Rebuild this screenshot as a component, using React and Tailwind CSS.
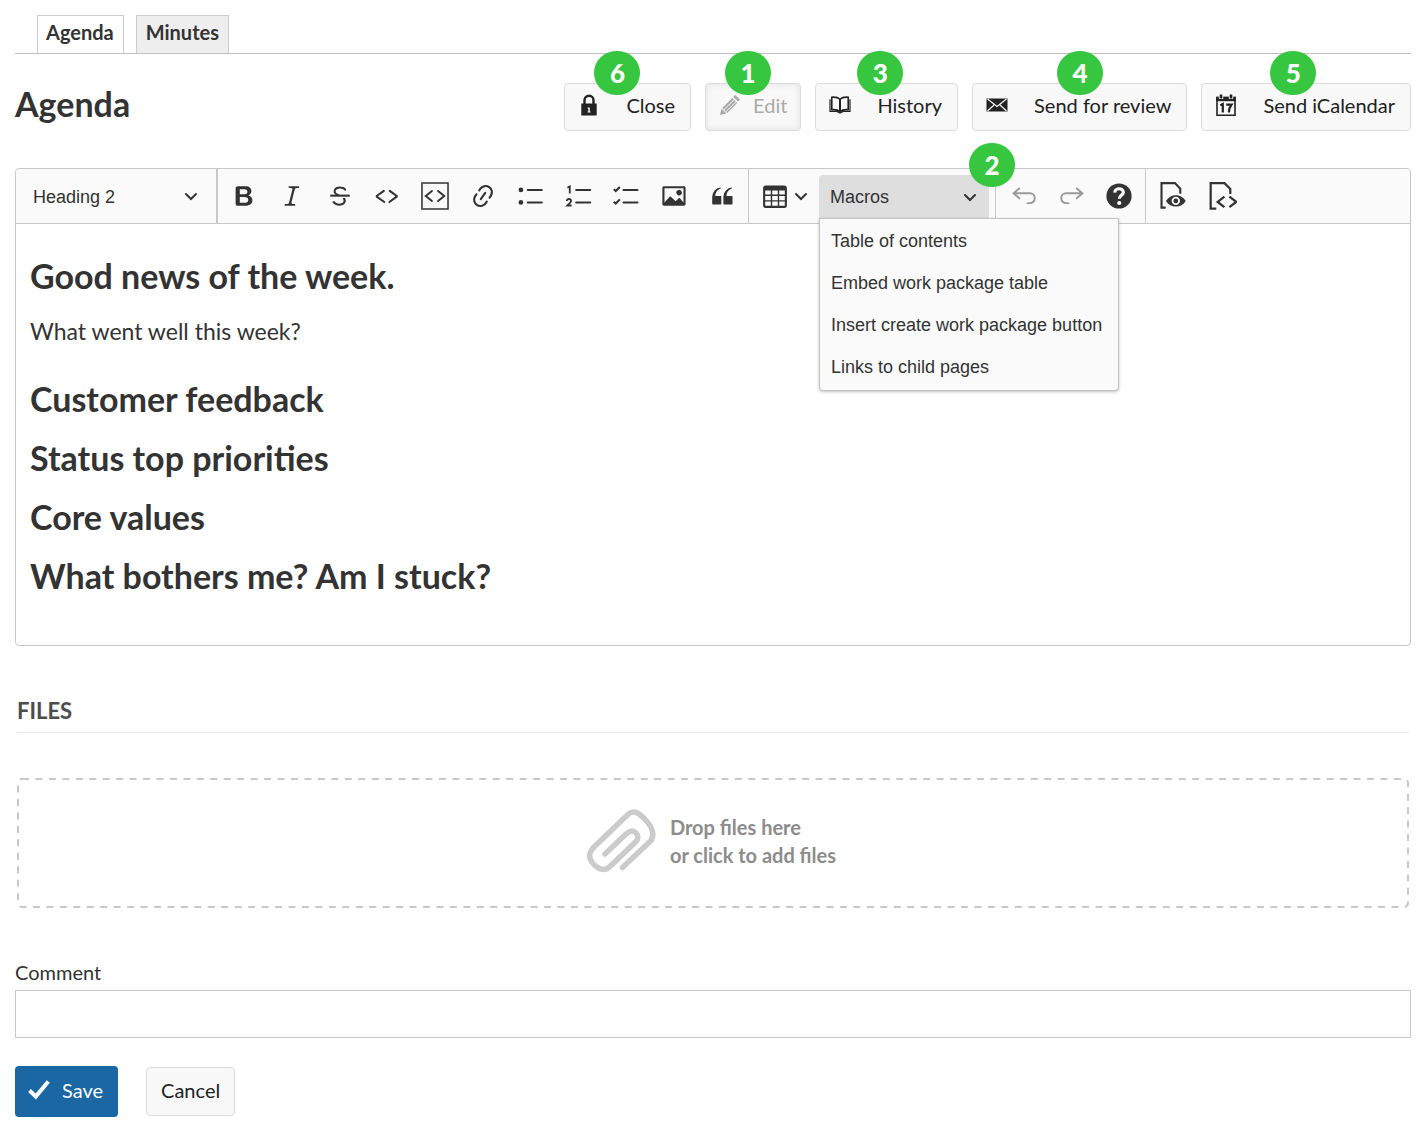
import React from "react";

function Icon({ children, className = "size-7" }) {
  return (
    <svg viewBox="0 0 20 20" fill="currentColor" aria-hidden="true" className={className}>
      {children}
    </svg>
  );
}

const icons = {
  bold: (
    <path d="M10.187 17H5.773c-.637 0-1.092-.138-1.364-.415-.273-.277-.409-.718-.409-1.323V4.738c0-.617.14-1.062.419-1.332.279-.27.73-.406 1.354-.406h4.68c.69 0 1.288.041 1.793.124.506.083.96.242 1.36.478.341.197.644.447.906.75a3.262 3.262 0 0 1 .808 2.162c0 1.401-.722 2.426-2.167 3.075C15.05 10.175 16 11.315 16 13.01a3.756 3.756 0 0 1-2.296 3.504 6.1 6.1 0 0 1-1.517.377c-.571.073-1.238.11-2 .11zm-.217-6.217H7v4.087h3.069c1.977 0 2.965-.69 2.965-2.072 0-.707-.256-1.22-.768-1.537-.512-.319-1.277-.478-2.296-.478zM7 5.13v3.619h2.606c.729 0 1.292-.067 1.69-.2a1.6 1.6 0 0 0 .91-.765c.165-.267.247-.566.247-.897 0-.707-.26-1.176-.778-1.409-.519-.232-1.31-.348-2.375-.348H7z" />
  ),
  italic: (
    <path d="m9.586 14.633.021.004c-.036.335.095.655.393.962.082.083.173.15.274.201h1.474a.6.6 0 1 1 0 1.2H5.304a.6.6 0 0 1 0-1.2h1.15c.474-.07.809-.182 1.005-.334.157-.122.291-.32.404-.597l2.416-9.55a1.053 1.053 0 0 0-.281-.823 1.12 1.12 0 0 0-.442-.296H8.15a.6.6 0 0 1 0-1.2h6.443a.6.6 0 1 1 0 1.2h-1.195c-.376.056-.65.155-.823.296-.215.175-.423.439-.623.79l-2.366 9.347z" />
  ),
  strike: (
    <>
      <path d="M7 16.4c-.8-.4-1.5-.9-2.2-1.5a.6.6 0 0 1-.2-.5l.3-.6h1c1 1.2 2.1 1.7 3.7 1.7 1 0 1.8-.3 2.3-.6.6-.4.6-1.2.6-1.3.2-1.2-.9-2.1-.9-2.1h2.1c.3.7.4 1.2.4 1.7v.8l-.6 1.2c-.6.8-1.1 1-1.6 1.2a6 6 0 0 1-2.4.6c-1 0-1.8-.3-2.5-.6zM6.8 9 6 8.3c-.4-.5-.5-.8-.5-1.6 0-.7.1-1.3.5-1.8.4-.6 1-1 1.6-1.3a6.3 6.3 0 0 1 4.7 0 4 4 0 0 1 1.7 1l.3.7c0 .1.2.4-.2.7-.4.2-.9.1-1 0a3 3 0 0 0-1.2-1c-.4-.2-1-.3-2-.4-.7 0-1.4.2-2 .6-.8.6-1 .8-1 1.5 0 .8.5 1 1.2 1.5.6.4 1.1.7 1.9 1H6.8z" />
      <path d="M3 10.5V9h14v1.5z" />
    </>
  ),
  code: (
    <path d="m12.5 5.7 5.2 3.9v1.3l-5.6 4c-.1.2-.3.2-.5.2-.3-.1-.6-.7-.6-1l.3-.4 4.7-3.5L11.5 7l-.2-.2c-.1-.3-.1-.6 0-.8.2-.2.5-.4.8-.4a.8.8 0 0 1 .4.1zm-5.2 0L2 9.6v1.3l5.6 4c.1.2.3.2.5.2.3-.1.7-.7.6-1 0-.1 0-.3-.2-.4l-5-3.5L8.2 7l.2-.2c.1-.3.1-.6 0-.8-.2-.2-.5-.4-.8-.4a.8.8 0 0 0-.3.1z" />
  ),
  codeBlock: (
    <g fill="none" stroke="currentColor">
      <path d="M.7.7h18.6v18.6H.7z" strokeWidth="1.1" />
      <path d="M7.8 6.4 3.4 10l4.4 3.6M12.2 6.4l4.4 3.6-4.4 3.6" strokeWidth="1.4" strokeLinecap="round" />
    </g>
  ),
  link: (
    <path d="m11.077 15 .991-1.416a.75.75 0 1 1 1.229.86l-1.148 1.64a.748.748 0 0 1-.217.206 5.251 5.251 0 0 1-8.503-5.955.741.741 0 0 1 .12-.274l1.147-1.639a.75.75 0 1 1 1.228.86L4.933 10.7l.006.003a3.75 3.75 0 0 0 6.132 4.294l.006.004zm5.494-5.335a.748.748 0 0 1-.12.274l-1.147 1.639a.75.75 0 1 1-1.228-.86l.86-1.23a3.75 3.75 0 0 0-6.144-4.301l-.86 1.229a.75.75 0 0 1-1.229-.86l1.148-1.64a.748.748 0 0 1 .217-.206 5.251 5.251 0 0 1 8.503 5.955zm-4.563-2.532a.75.75 0 0 1 .184 1.045l-3.155 4.505a.75.75 0 1 1-1.229-.86l3.155-4.506a.75.75 0 0 1 1.045-.184z" />
  ),
  bullets: (
    <>
      <circle cx="2.8" cy="5.7" r="1.7" />
      <circle cx="2.8" cy="14.6" r="1.7" />
      <path d="M7.7 5.7h10M7.7 14.6h10" fill="none" stroke="currentColor" strokeWidth="1.5" strokeLinecap="round" />
    </>
  ),
  numbers: (
    <g fill="none" stroke="currentColor" strokeWidth="1.3">
      <path d="M1.7 4.1 3.4 3.2v5" />
      <path d="M1.3 13.6c.1-2 3.2-1.9 3 0-.1 1-1.6 2-2.7 3.2h3.1" />
      <path d="M8 5.7h10M8 14.6h10" strokeWidth="1.5" strokeLinecap="round" />
    </g>
  ),
  todo: (
    <g fill="none" stroke="currentColor" strokeWidth="1.5">
      <path d="M1.3 5.2 2.700 6.500l2.900-3M1.300 14.100l1.400 1.300 2.900-3" />
      <path d="M8.2 5.7h10M8.2 14.6h10" strokeLinecap="round" />
    </g>
  ),
  image: (
    <path d="M6.91 10.54c.26-.23.64-.21.88.03l3.36 3.14 2.23-2.06a.64.64 0 0 1 .87 0l2.52 2.97V4.5H3.2v10.12l3.71-4.08zm10.27-7.51c.6 0 1.09.47 1.09 1.05v11.84c0 .59-.49 1.06-1.09 1.06H2.79c-.6 0-1.09-.47-1.09-1.06V4.08c0-.58.49-1.05 1.1-1.05h14.38zm-5.22 5.56a1.96 1.96 0 1 1 3.4-1.96 1.96 1.96 0 0 1-3.4 1.96z" />
  ),
  quote: (
    <path d="M3 10.423a6.5 6.5 0 0 1 6.056-6.408l.038.67C6.448 5.423 5.354 7.663 5.22 10H9c.552 0 .5.432.5.986v4.511c0 .554-.448.503-1 .503h-5c-.552 0-.5-.449-.5-1.003v-4.574zm8 0a6.5 6.5 0 0 1 6.056-6.408l.038.67c-2.646.739-3.74 2.979-3.873 5.315H17c.552 0 .5.432.5.986v4.511c0 .554-.448.503-1 .503h-5c-.552 0-.5-.449-.5-1.003v-4.574z" />
  ),
  table: (
    <path d="M3 6v3h4V6H3zm0 4v3h4v-3H3zm0 4v3h4v-3H3zm5 3h4v-3H8v3zm5 0h4v-3h-4v3zm4-4v-3h-4v3h4zm0-4V6h-4v3h4zm1.5 8a1.5 1.5 0 0 1-1.5 1.5H3A1.5 1.5 0 0 1 1.5 17V4c.222-.863 1.068-1.5 2-1.5h13c.932 0 1.778.637 2 1.5v13zM12 13v-3H8v3h4zm0-4V6H8v3h4z" />
  ),
  undo: (
    <g fill="none" stroke="currentColor" strokeWidth="1.4" strokeLinecap="round">
      <path d="M6.6 4.7 2.6 8l4 3.6M2.8 8.1h11.4a3.5 3.5 0 0 1 0 7h-1.6" />
    </g>
  ),
  redo: (
    <g fill="none" stroke="currentColor" strokeWidth="1.4" strokeLinecap="round">
      <path d="m13.4 4.7 4 3.3-4 3.6M17.2 8.1H5.8a3.5 3.5 0 0 0 0 7h1.6" />
    </g>
  ),
  help: (
    <>
      <circle cx="10" cy="10" r="9" />
      <path d="M6.9 7.6c.2-3.9 6.3-3.5 6.2-.2-.1 2.1-3 2.2-2.9 4.6" fill="none" stroke="#fafafa" strokeWidth="2.2" />
      <circle cx="10.2" cy="15" r="1.5" fill="#fafafa" />
    </>
  ),
  preview: (
    <>
      <path d="M4.700 18.300H1.800V.8h9.600l3.800 4v3.600" fill="none" stroke="currentColor" strokeWidth="1.500" />
      <path d="M5 13.600c3.200-5.600 10.900-5.600 14.100 0-3.200 5.300-10.900 5.300-14.100 0z" />
      <circle cx="12" cy="13.500" r="3" fill="#fafafa" />
      <circle cx="12" cy="13.500" r="1.700" />
    </>
  ),
  source: (
    <g fill="none" stroke="currentColor" strokeWidth="1.6">
      <path d="M5.2 19H1.2V.8h9.900l4.100 4.200v3.600" />
      <path d="m11 10.400-4.800 3.800 4.800 3.800M14.600 10.400l4.800 3.800-4.800 3.800" />
    </g>
  ),
};

function Chevron() {
  return (
    <svg viewBox="0 0 14 14" aria-hidden="true" className="pointer-events-none size-3.5" fill="none" stroke="currentColor" strokeWidth="2" strokeLinecap="round">
      <path d="m2 5 5 5 5-5" />
    </svg>
  );
}

function Badge({ n, className }) {
  return (
    <span className={`absolute z-20 flex h-11 w-[46px] items-center justify-center rounded-full bg-[#37c63f] text-[26px] font-black text-white ${className}`}>
      {n}
    </span>
  );
}

function LockIcon() {
  return (
    <svg viewBox="0 0 22 22" aria-hidden="true" className="size-[22px]">
      <path d="M6.500 10V6.200a4.500 4.500 0 0 1 9 0V10" fill="none" stroke="currentColor" strokeWidth="2.400" />
      <path d="M3.300 9.500h15.400v12H3.300z" fill="currentColor" />
      <path d="M9.600 13.500h2.200v4h.7v1H9.600v-1h.7v-3h-.7z" fill="#f8f8f8" />
    </svg>
  );
}

function PencilIcon() {
  return (
    <svg viewBox="0 0 22 22" aria-hidden="true" className="size-[22px]" fill="currentColor">
      <path d="m16.200 1 4.800 4.600-2 2L14.200 3z" />
      <path d="m13.200 4 1.500 1.500L4.700 15.600l-1.500-1.500zM15.200 6l1.500 1.400L6.600 17.400l-1.400-1.400zM17.200 7.900l1 1L8.200 19l-1.100-1.100z" />
      <path d="m2.600 14.700 4.900 4.900L.8 21z" />
    </svg>
  );
}

function BookIcon() {
  return (
    <svg viewBox="0 0 22 20" aria-hidden="true" className="h-5 w-[22px]" fill="none" stroke="currentColor" strokeWidth="1.6">
      <path d="M11 4.200C8.800 2 5.500 2 2.800 2.200v12.500c3-.3 6.200 0 8.200 2.100 2-2.100 5.200-2.400 8.200-2.100V2.200C16.500 2 13.200 2 11 4.200z" />
      <path d="M11 4v13" strokeWidth="2" />
      <path d="M1 4.200v12.200h7l3 1.600 3-1.600h7V4.200" strokeWidth="1.200" />
    </svg>
  );
}

function MailIcon() {
  return (
    <svg viewBox="0 0 22 14" aria-hidden="true" className="h-3.5 w-[22px]">
      <path d="M.5.500h21v13H.500z" fill="currentColor" />
      <path d="m1.500 1 9.500 7.500L20.500 1M1.500 13l6.500-6M20.500 13 14 7" fill="none" stroke="#f8f8f8" strokeWidth="1.200" />
    </svg>
  );
}

function CalendarIcon() {
  return (
    <svg viewBox="0 0 22 22" aria-hidden="true" className="size-[22px]">
      <path d="M2 3.500h18v17.700H2z" fill="none" stroke="currentColor" strokeWidth="1.600" />
      <path d="M1.200 2.800h19.600v4.400H1.200z" fill="currentColor" />
      <path d="M6 0v5M16 0v5" stroke="#f8f8f8" strokeWidth="4.400" />
      <path d="M6 .5v4M16 .5v4" stroke="currentColor" strokeWidth="2.600" />
      <path d="M5.300 11.200 7.800 10v8.500M11.200 10.700h5.200c-1.800 2.300-2.400 4.800-2.500 7.800" fill="none" stroke="currentColor" strokeWidth="2.200" />
    </svg>
  );
}

function PaperclipIcon() {
  return (
    <svg viewBox="0 0 70 66" aria-hidden="true" className="h-[66px] w-[70px]" fill="none" stroke="#cbcbcb" strokeWidth="5.500" strokeLinecap="round">
      <path d="M36.500 59.500 64 33.500C69 28.500 67 20 60.500 13 53 4.500 47.500 1.500 42.500 6L8.500 38.500C2 45 2.500 50.500 7.500 56c5.500 6 11.500 7.500 17 2L49.500 34c3-3 3-6.500.5-9-2.500-2.800-6-3-9.500.5L19 46" />
    </svg>
  );
}

function ActionButton({ icon, label, n, badge, disabled, spacing = "gap-[26px] pl-[13px] pr-[15px]" }) {
  return (
    <div className="relative">
      <button
        type="button"
        disabled={disabled}
        className={`flex h-12 items-center rounded-sm border border-[#dcdcdc] bg-[#f8f8f8] pb-1 text-xl leading-7 text-[#222] disabled:text-[#aaa] disabled:shadow-[inset_0_0_6px_#e0e0e0] ${spacing}`}
      >
        {icon}
        {label}
      </button>
      <Badge n={n} className={badge} />
    </div>
  );
}

function ToolButton({ name, label, disabled }) {
  return (
    <button type="button" aria-label={label} disabled={disabled} className="flex h-11 flex-1 items-center justify-center disabled:text-[#9a9a9a]">
      <Icon>{icons[name]}</Icon>
    </button>
  );
}

const formatTools = [
  ["bold", "Bold"],
  ["italic", "Italic"],
  ["strike", "Strikethrough"],
  ["code", "Code"],
  ["codeBlock", "Insert code snippet"],
  ["link", "Link"],
  ["bullets", "Bulleted List"],
  ["numbers", "Numbered List"],
  ["todo", "To-do List"],
  ["image", "Insert image"],
  ["quote", "Block quote"],
];

const macros = ["Table of contents", "Embed work package table", "Insert create work package button", "Links to child pages"];

function Toolbar() {
  return (
    <div role="toolbar" aria-label="Editor toolbar" className="flex h-[55px] items-stretch rounded-t-sm border-b border-[#c8c8c8] bg-[#fafafa] font-['Liberation_Sans',Arial,sans-serif] text-lg text-[#333]">
      <div className="relative flex w-[202px] items-center border-r-2 border-[#c8c8c8]">
        <select aria-label="Heading" defaultValue="Heading 2" className="h-full w-full appearance-none bg-transparent pt-0.5 pl-[17px]">
          <option>Paragraph</option>
          <option>Heading 1</option>
          <option>Heading 2</option>
          <option>Heading 3</option>
        </select>
        <span className="pointer-events-none absolute right-[18px]">
          <Chevron />
        </span>
      </div>
      <div className="flex w-[531px] items-center border-r border-[#c8c8c8] px-0.5">
        {formatTools.map(([name, label]) => (
          <ToolButton key={name} name={name} label={label} />
        ))}
      </div>
      <div className="flex items-center pl-3">
        <button type="button" aria-label="Insert table" className="flex h-11 w-[58px] items-center gap-[5px]">
          <Icon>{icons.table}</Icon>
          <Chevron />
        </button>
        <div className="relative flex h-full items-end pb-1">
          <button type="button" aria-haspopup="menu" aria-expanded="true" className="flex h-11 w-[170px] items-center justify-between rounded-t-sm bg-[#dedede] pr-3 pl-[11px]">
            Macros
            <Chevron />
          </button>
          <ul role="menu" className="absolute top-[49px] left-0 z-10 w-[300px] rounded-b-sm border border-[#c4c4c4] bg-[#fafafa] pt-px pb-0.5 shadow-[0_1px_3px_rgba(0,0,0,0.25)]">
            {macros.map((m) => (
              <li key={m} role="none">
                <button type="button" role="menuitem" className="flex h-[42px] w-full items-center px-[11px] text-left whitespace-nowrap">
                  {m}
                </button>
              </li>
            ))}
          </ul>
          <Badge n={2} className="-top-[26px] left-[150px] font-[Lato,sans-serif]" />
        </div>
      </div>
      <div className="ml-1.5 flex w-[151px] items-center border-x border-[#c8c8c8] pr-0.5 pl-1">
        <ToolButton name="undo" label="Undo" disabled />
        <ToolButton name="redo" label="Redo" disabled />
        <ToolButton name="help" label="Formatting help" />
      </div>
      <div className="ml-0.5 flex w-[100px] items-center">
        <ToolButton name="preview" label="Toggle preview mode" />
        <ToolButton name="source" label="Switch to Markdown source" />
      </div>
    </div>
  );
}

export default function App() {
  return (
    <main className="bg-white px-[15px] pt-[15px] pb-2 font-[Lato,sans-serif] text-xl text-[#333]">
      <nav className="flex gap-3 border-b border-[#bfbfbf] pl-[22px] font-bold">
        <a href="#agenda" aria-current="page" className="border border-b-0 border-[#cbcbcb] bg-white pt-0.5 pr-[9px] pb-[7px] pl-2">
          Agenda
        </a>
        <a href="#minutes" className="border border-b-0 border-[#cbcbcb] bg-[#eee] pt-0.5 pr-[9px] pb-[7px] pl-[9px]">
          Minutes
        </a>
      </nav>

      <header className="mt-[29px] flex items-center justify-between">
        <h1 className="pb-1.5 text-[34px] leading-10 font-bold">Agenda</h1>
        <div className="flex gap-3.5">
          <ActionButton icon={<LockIcon />} label="Close" n={6} badge="-top-8 left-[30px]" />
          <ActionButton icon={<PencilIcon />} label="Edit" n={1} spacing="gap-3 px-[13px]" badge="-top-8 left-5" disabled />
          <ActionButton icon={<BookIcon />} label="History" n={3} badge="-top-8 left-[42px]" />
          <ActionButton icon={<MailIcon />} label="Send for review" n={4} badge="-top-8 left-[85px]" />
          <ActionButton icon={<CalendarIcon />} label="Send iCalendar" n={5} badge="-top-8 left-[69px]" />
        </div>
      </header>

      <section className="mt-[37px] rounded-sm border border-[#c8c8c8]">
        <Toolbar />
        <div role="textbox" aria-label="Agenda text" contentEditable suppressContentEditableWarning className="h-[421px] px-3.5 pt-[31px]">
          <h2 className="text-[34px] leading-[42px] font-bold">Good news of the week.</h2>
          <p className="mt-[18px] text-[23px] leading-8">What went well this week?</p>
          <h2 className="mt-[31px] text-[34px] leading-[42px] font-bold">Customer feedback</h2>
          <h2 className="mt-[17px] text-[34px] leading-[42px] font-bold">Status top priorities</h2>
          <h2 className="mt-[17px] text-[34px] leading-[42px] font-bold">Core values</h2>
          <h2 className="mt-[17px] text-[34px] leading-[42px] font-bold">What bothers me? Am I stuck?</h2>
        </div>
      </section>

      <section className="mx-0.5 mt-[50px]">
        <h2 className="border-b border-[#e7e7e7] pb-1.5 text-[22px] leading-[30px] font-bold text-[#4d4d4d]">FILES</h2>
        <button type="button" className="relative mt-[45px] flex h-[130px] w-full items-center justify-center gap-3.5 rounded pr-1 pb-1 text-left font-bold text-[#8c8c8c]">
          <svg aria-hidden="true" className="absolute inset-0 size-full">
            <rect x="1" y="1" rx="4" fill="none" stroke="#c8c8c8" strokeWidth="2" strokeDasharray="7 6.450" className="h-[calc(100%-2px)] w-[calc(100%-2px)]" />
          </svg>
          <PaperclipIcon />
          <span className="leading-7">
            Drop files here
            <br />
            or click to add files
          </span>
        </button>
      </section>

      <form className="mt-[50px]" onSubmit={(e) => e.preventDefault()}>
        <label htmlFor="comment" className="block pb-1 leading-7">
          Comment
        </label>
        <input id="comment" type="text" className="block h-12 w-full border border-[#c8c8c8] bg-white px-2" />
        <div className="mt-7 flex items-center gap-7">
          <button type="submit" className="flex h-[51px] items-center gap-3 rounded-sm bg-[#1a67a3] pr-[15px] pb-1 pl-[13px] text-white">
            <svg viewBox="0 0 22 20" aria-hidden="true" className="h-5 w-[22px]" fill="none" stroke="currentColor" strokeWidth="4" strokeLinecap="butt">
              <path d="m1.500 10.500 6.300 6L20.300 1.500" />
            </svg>
            Save
          </button>
          <button type="button" className="h-[49px] rounded-sm border border-[#dcdcdc] bg-[#f8f8f8] px-3.5 pb-1 text-[#222]">
            Cancel
          </button>
        </div>
      </form>
    </main>
  );
}
